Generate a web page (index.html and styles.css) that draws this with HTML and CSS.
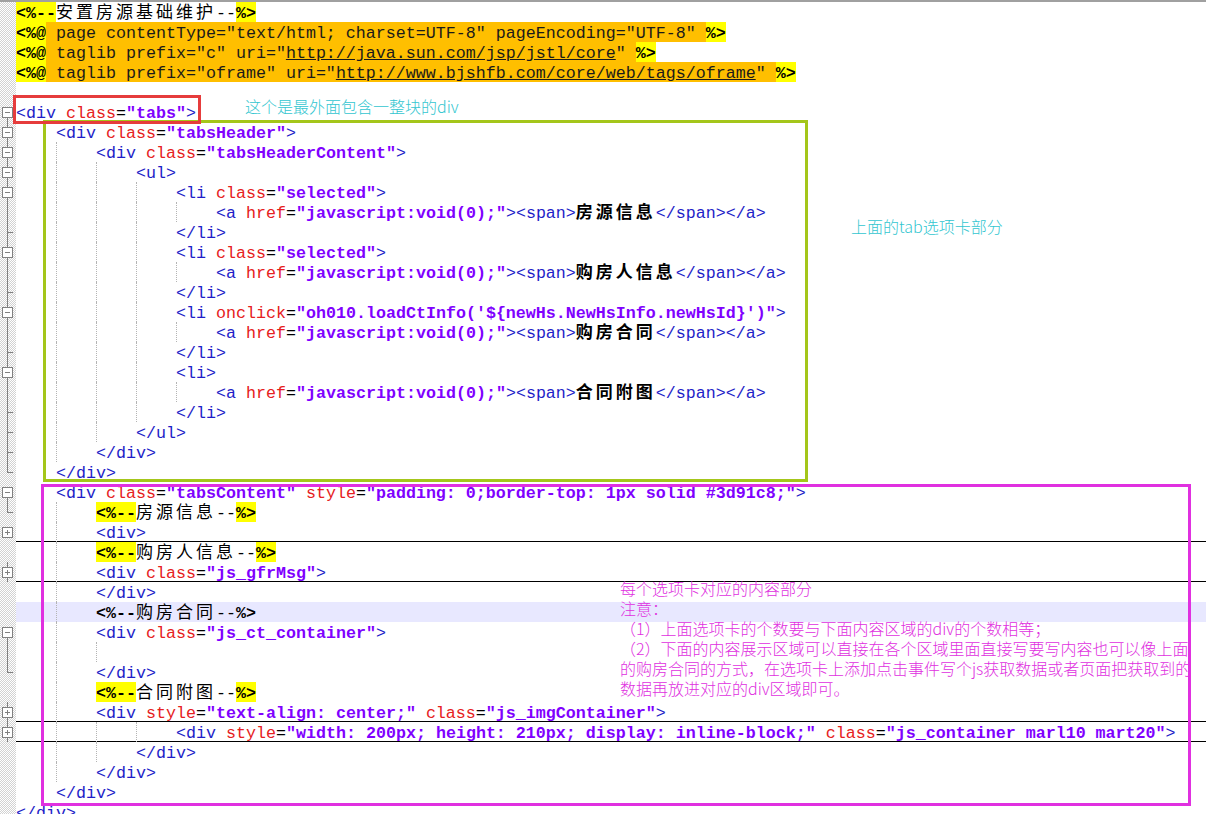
FILE: index.html
```html
<!DOCTYPE html>
<html lang="zh-CN">
<head>
    <meta charset="UTF-8">
    <title>oh010 tabs - Notepad++</title>
    <link rel="stylesheet" href="styles.css">
</head>
<body>
<div class="screen">
    <div class="topbar"></div>
    <div class="lines">
        <div class="ln"><span class="gut"></span><span class="code"><span class="y b">&lt;%--</span><span class="cj">安置房源基础维护</span>--<span class="y b">%&gt;</span></span></div>
        <div class="ln"><span class="gut"></span><span class="code"><span class="y b">&lt;%@</span><span class="o"> page contentType="text/html; charset=UTF-8" pageEncoding="UTF-8" </span><span class="y b">%&gt;</span></span></div>
        <div class="ln"><span class="gut"></span><span class="code"><span class="y b">&lt;%@</span><span class="o"> taglib prefix="c" uri="<span class="u">http://java.sun.com/jsp/jstl/core</span>" </span><span class="y b">%&gt;</span></span></div>
        <div class="ln"><span class="gut"></span><span class="code"><span class="y b">&lt;%@</span><span class="o"> taglib prefix="oframe" uri="<span class="u">http://www.bjshfb.com/core/web/tags/oframe</span>" </span><span class="y b">%&gt;</span></span></div>
        <div class="ln"><span class="gut"></span><span class="code"></span></div>
        <div class="ln"><span class="gut g-open"></span><span class="code"><span class="t">&lt;div</span> <span class="a">class</span>=<span class="v">"tabs"</span><span class="t">&gt;</span></span></div>
        <div class="ln"><span class="gut g-mid"></span><span class="code"><span class="ind"></span><span class="t">&lt;div</span> <span class="a">class</span>=<span class="v">"tabsHeader"</span><span class="t">&gt;</span></span></div>
        <div class="ln"><span class="gut g-mid"></span><span class="code"><span class="ind"></span><span class="ind"></span><span class="t">&lt;div</span> <span class="a">class</span>=<span class="v">"tabsHeaderContent"</span><span class="t">&gt;</span></span></div>
        <div class="ln"><span class="gut g-mid"></span><span class="code"><span class="ind"></span><span class="ind"></span><span class="ind"></span><span class="t">&lt;ul&gt;</span></span></div>
        <div class="ln"><span class="gut g-mid"></span><span class="code"><span class="ind"></span><span class="ind"></span><span class="ind"></span><span class="ind"></span><span class="t">&lt;li</span> <span class="a">class</span>=<span class="v">"selected"</span><span class="t">&gt;</span></span></div>
        <div class="ln"><span class="gut g-line"></span><span class="code"><span class="ind"></span><span class="ind"></span><span class="ind"></span><span class="ind"></span><span class="ind"></span><span class="t">&lt;a</span> <span class="a">href</span>=<span class="v">"javascript:void(0);"</span><span class="t">&gt;&lt;span&gt;</span><span class="cj b">房源信息</span><span class="t">&lt;/span&gt;&lt;/a&gt;</span></span></div>
        <div class="ln"><span class="gut g-end"></span><span class="code"><span class="ind"></span><span class="ind"></span><span class="ind"></span><span class="ind"></span><span class="t">&lt;/li&gt;</span></span></div>
        <div class="ln"><span class="gut g-mid"></span><span class="code"><span class="ind"></span><span class="ind"></span><span class="ind"></span><span class="ind"></span><span class="t">&lt;li</span> <span class="a">class</span>=<span class="v">"selected"</span><span class="t">&gt;</span></span></div>
        <div class="ln"><span class="gut g-line"></span><span class="code"><span class="ind"></span><span class="ind"></span><span class="ind"></span><span class="ind"></span><span class="ind"></span><span class="t">&lt;a</span> <span class="a">href</span>=<span class="v">"javascript:void(0);"</span><span class="t">&gt;&lt;span&gt;</span><span class="cj b">购房人信息</span><span class="t">&lt;/span&gt;&lt;/a&gt;</span></span></div>
        <div class="ln"><span class="gut g-end"></span><span class="code"><span class="ind"></span><span class="ind"></span><span class="ind"></span><span class="ind"></span><span class="t">&lt;/li&gt;</span></span></div>
        <div class="ln"><span class="gut g-mid"></span><span class="code"><span class="ind"></span><span class="ind"></span><span class="ind"></span><span class="ind"></span><span class="t">&lt;li</span> <span class="a">onclick</span>=<span class="v">"oh010.loadCtInfo('${newHs.NewHsInfo.newHsId}')"</span><span class="t">&gt;</span></span></div>
        <div class="ln"><span class="gut g-line"></span><span class="code"><span class="ind"></span><span class="ind"></span><span class="ind"></span><span class="ind"></span><span class="ind"></span><span class="t">&lt;a</span> <span class="a">href</span>=<span class="v">"javascript:void(0);"</span><span class="t">&gt;&lt;span&gt;</span><span class="cj b">购房合同</span><span class="t">&lt;/span&gt;&lt;/a&gt;</span></span></div>
        <div class="ln"><span class="gut g-end"></span><span class="code"><span class="ind"></span><span class="ind"></span><span class="ind"></span><span class="ind"></span><span class="t">&lt;/li&gt;</span></span></div>
        <div class="ln"><span class="gut g-mid"></span><span class="code"><span class="ind"></span><span class="ind"></span><span class="ind"></span><span class="ind"></span><span class="t">&lt;li&gt;</span></span></div>
        <div class="ln"><span class="gut g-line"></span><span class="code"><span class="ind"></span><span class="ind"></span><span class="ind"></span><span class="ind"></span><span class="ind"></span><span class="t">&lt;a</span> <span class="a">href</span>=<span class="v">"javascript:void(0);"</span><span class="t">&gt;&lt;span&gt;</span><span class="cj b">合同附图</span><span class="t">&lt;/span&gt;&lt;/a&gt;</span></span></div>
        <div class="ln"><span class="gut g-end"></span><span class="code"><span class="ind"></span><span class="ind"></span><span class="ind"></span><span class="ind"></span><span class="t">&lt;/li&gt;</span></span></div>
        <div class="ln"><span class="gut g-end"></span><span class="code"><span class="ind"></span><span class="ind"></span><span class="ind"></span><span class="t">&lt;/ul&gt;</span></span></div>
        <div class="ln"><span class="gut g-end"></span><span class="code"><span class="ind"></span><span class="ind"></span><span class="t">&lt;/div&gt;</span></span></div>
        <div class="ln"><span class="gut g-last"></span><span class="code"><span class="ind"></span><span class="t">&lt;/div&gt;</span></span></div>
        <div class="ln"><span class="gut g-open"></span><span class="code"><span class="ind"></span><span class="t">&lt;div</span> <span class="a">class</span>=<span class="v">"tabsContent"</span> <span class="a">style</span>=<span class="v">"padding: 0;border-top: 1px solid #3d91c8;"</span><span class="t">&gt;</span></span></div>
        <div class="ln"><span class="gut g-last"></span><span class="code"><span class="ind"></span><span class="ind"></span><span class="y b">&lt;%--</span><span class="cj">房源信息</span>--<span class="y b">%&gt;</span></span></div>
        <div class="ln folded"><span class="gut g-plus"></span><span class="code"><span class="ind"></span><span class="ind"></span><span class="t">&lt;div&gt;</span></span></div>
        <div class="ln"><span class="gut"></span><span class="code"><span class="ind"></span><span class="ind"></span><span class="y b">&lt;%--</span><span class="cj">购房人信息</span>--<span class="y b">%&gt;</span></span></div>
        <div class="ln folded"><span class="gut g-plus g-line"></span><span class="code"><span class="ind"></span><span class="ind"></span><span class="t">&lt;div</span> <span class="a">class</span>=<span class="v">"js_gfrMsg"</span><span class="t">&gt;</span></span></div>
        <div class="ln"><span class="gut"></span><span class="code"><span class="ind"></span><span class="ind"></span><span class="t">&lt;/div&gt;</span></span></div>
        <div class="ln current"><span class="gut"></span><span class="code"><span class="ind"></span><span class="ind"></span><span class="b">&lt;%--</span><span class="cj">购房合同</span>--<span class="b">%&gt;</span></span></div>
        <div class="ln"><span class="gut g-open"></span><span class="code"><span class="ind"></span><span class="ind"></span><span class="t">&lt;div</span> <span class="a">class</span>=<span class="v">"js_ct_container"</span><span class="t">&gt;</span></span></div>
        <div class="ln"><span class="gut g-line"></span><span class="code"><span class="ind"></span><span class="ind"></span><span class="ind"></span></span></div>
        <div class="ln"><span class="gut g-last"></span><span class="code"><span class="ind"></span><span class="ind"></span><span class="t">&lt;/div&gt;</span></span></div>
        <div class="ln"><span class="gut"></span><span class="code"><span class="ind"></span><span class="ind"></span><span class="y b">&lt;%--</span><span class="cj">合同附图</span>--<span class="y b">%&gt;</span></span></div>
        <div class="ln folded"><span class="gut g-plus g-line"></span><span class="code"><span class="ind"></span><span class="ind"></span><span class="t">&lt;div</span> <span class="a">style</span>=<span class="v">"text-align: center;"</span> <span class="a">class</span>=<span class="v">"js_imgContainer"</span><span class="t">&gt;</span></span></div>
        <div class="ln folded"><span class="gut g-plus g-line"></span><span class="code"><span class="ind"></span><span class="ind"></span><span class="ind"></span><span class="ind"></span><span class="t">&lt;div</span> <span class="a">style</span>=<span class="v">"width: 200px; height: 210px; display: inline-block;"</span> <span class="a">class</span>=<span class="v">"js_container marl10 mart20"</span><span class="t">&gt;</span></span></div>
        <div class="ln"><span class="gut"></span><span class="code"><span class="ind"></span><span class="ind"></span><span class="ind"></span><span class="t">&lt;/div&gt;</span></span></div>
        <div class="ln"><span class="gut"></span><span class="code"><span class="ind"></span><span class="ind"></span><span class="t">&lt;/div&gt;</span></span></div>
        <div class="ln"><span class="gut"></span><span class="code"><span class="ind"></span><span class="t">&lt;/div&gt;</span></span></div>
        <div class="ln"><span class="gut"></span><span class="code"><span class="t">&lt;/div&gt;</span></span></div>
    </div>

    <!-- hand-drawn markup on top of the editor -->
    <div class="mark mark-green"></div>
    <div class="mark mark-red"></div>

    <div class="note note-cyan note-tabs">这个是最外面包含一整块的div</div>
    <div class="note note-cyan note-header">上面的tab选项卡部分</div>
    <div class="note note-pink note-content">
        <div>每个选项卡对应的内容部分</div>
        <div>注意：</div>
        <div>（1）上面选项卡的个数要与下面内容区域的div的个数相等；</div>
        <div>（2）下面的内容展示区域可以直接在各个区域里面直接写要写内容也可以像上面</div>
        <div>的购房合同的方式，在选项卡上添加点击事件写个js获取数据或者页面把获取到的</div>
        <div>数据再放进对应的div区域即可。</div>
    </div>
    <div class="mark mark-pink"></div>
</div>
</body>
</html>
```

FILE: styles.css
```css
body {
    margin: 0;
    background-color: #fff;
}
.screen {
    position: relative;
    width: 1206px;
    height: 814px;
    overflow: hidden;
    background-color: #fff;
}
.topbar {
    height: 2px;
    background-color: #a0a0a0;
}
.lines {
    font-family: "Liberation Mono", "Courier New", monospace;
    font-size: 16.67px;
    color: #000;
}
.ln {
    display: flex;
    height: 20px;
}
.gut {
    position: relative;
    flex: none;
    width: 16px;
    height: 20px;
    background: repeating-conic-gradient(#d2d2d2 0 25%, #fff 0 50%) 0 0 / 2px 2px;
}
.code {
    flex: 1;
    display: block;
    height: 20px;
    line-height: 23px;
    white-space: pre;
    box-sizing: border-box;
}
.folded .code {
    border-bottom: 1px solid #000;
}
.current .code {
    background-color: #e8e8ff;
}

/* indentation with guides */
.ind {
    display: inline-block;
    width: 40px;
    height: 20px;
    vertical-align: top;
    box-sizing: border-box;
}
.ind + .ind {
    border-left: 1px dotted #b4b4b4;
}

/* syntax colours */
.t { color: #1e1ec8; }
.a { color: #e62020; }
.v { color: #8000ff; font-weight: bold; }
.b { font-weight: bold; }
.u { text-decoration: underline; }
.y, .o {
    display: inline-block;
    height: 20px;
    vertical-align: top;
}
.y { background-color: #ffff00; }
.o { background-color: #ffbf00; color: #1a1a1a; }
.cj {
    font-family: "Noto Sans CJK SC", sans-serif;
    font-size: 17px;
    line-height: 1;
    letter-spacing: 3px;
}

/* fold margin markers */
.g-line::before, .g-end::before, .g-mid::before, .g-open::before, .g-last::before {
    content: "";
    position: absolute;
    left: 7px;
    width: 1px;
    background-color: #808080;
}
.g-line::before, .g-end::before, .g-mid::before { top: 0; bottom: 0; }
.g-open::before { top: 10px; bottom: 0; }
.g-last::before { top: 0; height: 11px; }
.g-end::after, .g-last::after {
    content: "";
    position: absolute;
    left: 7px;
    top: 10px;
    width: 6px;
    height: 1px;
    background-color: #808080;
}
.g-mid::after, .g-open::after, .g-plus::after {
    content: "";
    position: absolute;
    left: 2px;
    top: 5px;
    width: 9px;
    height: 9px;
    border: 1px solid #808080;
    background: linear-gradient(#808080, #808080) center / 5px 1px no-repeat, #fff;
}
.g-plus::after {
    background: linear-gradient(#808080, #808080) center / 5px 1px no-repeat,
                linear-gradient(#808080, #808080) center / 1px 5px no-repeat, #fff;
}

/* boxes drawn over the screenshot */
.mark {
    position: absolute;
    box-sizing: border-box;
    border: 3px solid;
}
.mark-red {
    left: 13px;
    top: 95px;
    width: 188px;
    height: 29px;
    border-color: #e63c3c;
}
.mark-green {
    left: 43px;
    top: 120px;
    width: 765px;
    height: 362px;
    border-color: #a4c61a;
}
.mark-pink {
    left: 41px;
    top: 484px;
    width: 1150px;
    height: 322px;
    border-color: #e030e0;
}

.note {
    position: absolute;
    font-family: "Noto Sans CJK SC", sans-serif;
    font-size: 16px;
    font-weight: 300;
    line-height: 20px;
    white-space: nowrap;
}
.note-cyan { color: #33c6d0; }
.note-pink { color: #e030e0; }
.note-tabs {
    left: 245px;
    top: 96px;
}
.note-header {
    left: 851px;
    top: 216px;
}
.note-content {
    left: 620px;
    top: 578px;
    width: 571px;
    overflow: hidden;
}
```
